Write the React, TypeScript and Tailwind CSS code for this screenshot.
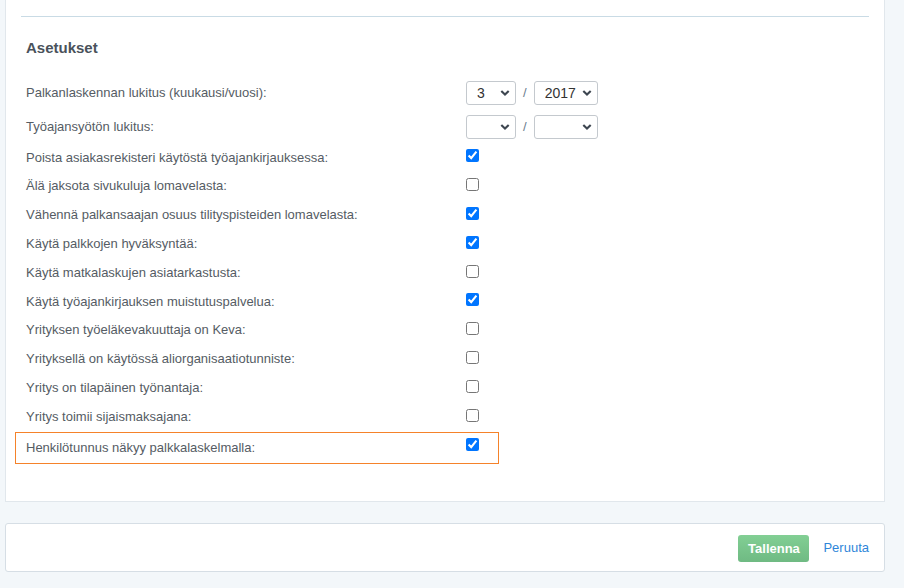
import React from 'react';

type Row = { label: string; kind: 'check' | 'month'; checked?: boolean; month?: string; year?: string; highlight?: boolean };

const rows: Row[] = [
  { label: 'Palkanlaskennan lukitus (kuukausi/vuosi):', kind: 'month', month: '3', year: '2017' },
  { label: 'Työajansyötön lukitus:', kind: 'month', month: '', year: '' },
  { label: 'Poista asiakasrekisteri käytöstä työajankirjauksessa:', kind: 'check', checked: true },
  { label: 'Älä jaksota sivukuluja lomavelasta:', kind: 'check', checked: false },
  { label: 'Vähennä palkansaajan osuus tilityspisteiden lomavelasta:', kind: 'check', checked: true },
  { label: 'Käytä palkkojen hyväksyntää:', kind: 'check', checked: true },
  { label: 'Käytä matkalaskujen asiatarkastusta:', kind: 'check', checked: false },
  { label: 'Käytä työajankirjauksen muistutuspalvelua:', kind: 'check', checked: true },
  { label: 'Yrityksen työeläkevakuuttaja on Keva:', kind: 'check', checked: false },
  { label: 'Yrityksellä on käytössä aliorganisaatiotunniste:', kind: 'check', checked: false },
  { label: 'Yritys on tilapäinen työnantaja:', kind: 'check', checked: false },
  { label: 'Yritys toimii sijaismaksajana:', kind: 'check', checked: false },
  { label: 'Henkilötunnus näkyy palkkalaskelmalla:', kind: 'check', checked: true, highlight: true },
];

const Chevron = () => (
  <svg width="10" height="7" viewBox="0 0 10 7" className="pointer-events-none absolute right-[6px] top-1/2 -translate-y-1/2">
    <path d="M1.3 1.4 L5 5 L8.7 1.4" fill="none" stroke="#3d4650" strokeWidth="2.1" />
  </svg>
);

const Select: React.FC<{ value: string; width: string; options: string[] }> = ({ value, width, options }) => (
  <div className={`relative ${width} h-[24px]`}>
    <select
      defaultValue={value}
      className="h-full w-full appearance-none rounded-[3px] border border-[#c4c9ce] bg-white pl-[10px] text-[14px] text-[#333]"
    >
      {options.map((o) => (
        <option key={o} value={o}>{o}</option>
      ))}
    </select>
    <Chevron />
  </div>
);

export default function App() {
  return (
    <div className="min-h-[588px] bg-[#f3f7fa] pl-[5px] pr-[19px] font-['Liberation_Sans',Arial,sans-serif] text-[13px] text-[#555c64]">
      <div className="border-x border-b border-[#e1e7ec] bg-white pl-[9px] pr-[15px] pb-[37px]">
        <div className="pt-[16px] pl-[6px]">
          <div className="h-px bg-[#c9dbe5]" />
        </div>
        <h3 className="pl-[11px] pt-[20px] text-[15px] font-bold leading-[22px] text-[#4a525b]">Asetukset</h3>
        <div className="mt-[16px] w-[484px]">
          {rows.map((r, i) => (
            <div
              key={i}
              className={`flex px-[10px] ${
                r.kind === 'month' ? (i === 0 ? 'h-[36px]' : 'h-[32px]') : r.highlight ? 'h-[32px]' : 'h-[28.8px]'
              } ${r.highlight ? 'mt-[1px] items-center border border-[#f5822a]' : 'items-center border border-transparent'}`}
            >
              <div className="w-[440px] shrink-0">{r.label}</div>
              {r.kind === 'month' ? (
                <div className="flex items-center">
                  <Select value={r.month!} width="w-[50px]" options={['', '1', '2', '3', '4', '5', '6', '7', '8', '9', '10', '11', '12']} />
                  <span className="mx-[7px] text-[#6a7d8e]">/</span>
                  <Select value={r.year!} width="w-[64px]" options={['', '2015', '2016', '2017', '2018']} />
                </div>
              ) : r.highlight ? (
                <input type="checkbox" defaultChecked={r.checked} className="mt-[5px] h-[13px] w-[13px] self-start" />
              ) : (
                <input type="checkbox" defaultChecked={r.checked} className="-mt-[3px] h-[13px] w-[13px]" />
              )}
            </div>
          ))}
        </div>
      </div>
      <div className="mt-[21px] flex h-[49px] items-center justify-end rounded-[3px] border border-[#d6dee5] bg-white pr-[15px]">
        <button className="mt-[2px] h-[27px] w-[71px] rounded-[3px] bg-gradient-to-b from-[#82cf94] to-[#6fba83] text-[13px] font-bold text-white">
          Tallenna
        </button>
        <a className="ml-[14px] text-[13px] text-[#2f86d9]">Peruuta</a>
      </div>
    </div>
  );
}
